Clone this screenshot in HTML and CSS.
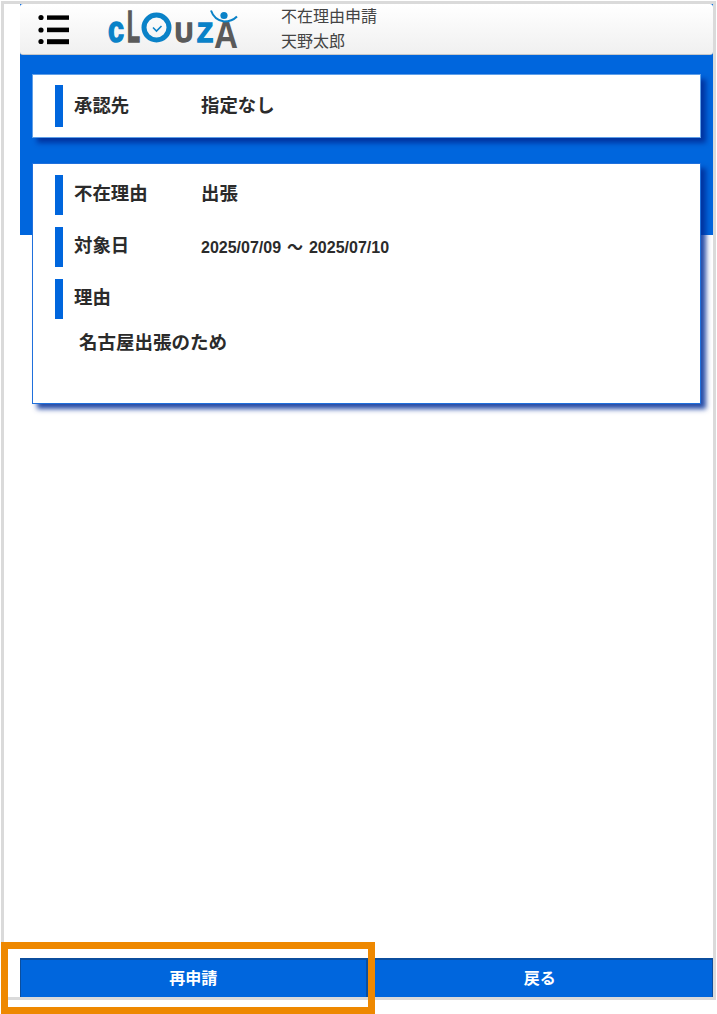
FILE: index.html
```html
<!DOCTYPE html>
<html lang="ja">
<head>
    <meta charset="UTF-8">
    <meta name="viewport" content="width=device-width, initial-scale=1.0">
    <title>不在理由申請</title>
    <link rel="stylesheet" href="styles.css">
</head>
<body>
    <div class="frame">
        <main class="screen">
            <header class="app-header">
                <svg class="menu-icon" width="32" height="32" viewBox="0 0 32 32" aria-hidden="true">
                    <circle cx="3" cy="4.5" r="2.6"/>
                    <circle cx="3" cy="17" r="2.6"/>
                    <circle cx="3" cy="28.5" r="2.6"/>
                    <rect x="9" y="2.4" width="22" height="4.4"/>
                    <rect x="9" y="14.6" width="22" height="4.6"/>
                    <rect x="9" y="26.2" width="22" height="5"/>
                </svg>
                <svg class="logo" width="140" height="60" viewBox="0 0 140 60" role="img" aria-label="cLOUZA">
                    <text class="logo-blue logo-heavy" x="2" y="42.5" font-size="36" textLength="16" lengthAdjust="spacingAndGlyphs">c</text>
                    <text class="logo-grey logo-heavy" x="21" y="42.5" font-size="44" textLength="13" lengthAdjust="spacingAndGlyphs">L</text>
                    <circle cx="50.5" cy="28.5" r="12.5" class="clock-ring"/>
                    <path d="M47 28.5l3.5 3.5 5-5" class="clock-hand"/>
                    <text class="logo-grey logo-heavy" x="69" y="42.5" font-size="27" textLength="18" lengthAdjust="spacingAndGlyphs">U</text>
                    <text class="logo-blue logo-heavy" x="91" y="42.5" font-size="27" textLength="16" lengthAdjust="spacingAndGlyphs">Z</text>
                    <text class="logo-grey" x="108" y="48.5" font-size="39" textLength="24" lengthAdjust="spacingAndGlyphs">A</text>
                    <circle cx="118" cy="16.5" r="3.6" class="logo-head"/>
                    <path d="M105 11.5c2 6 6 10 13 11c6 0 10-2 13-5" class="logo-arms"/>
                </svg>
                <div class="page-title">
                    <div>不在理由申請</div>
                    <div>天野太郎</div>
                </div>
            </header>

            <section class="card card-approver">
                <div class="row">
                    <div class="row-label">承認先</div>
                    <div class="row-value">指定なし</div>
                </div>
            </section>

            <section class="card card-detail">
                <div class="row">
                    <div class="row-label">不在理由</div>
                    <div class="row-value">出張</div>
                </div>
                <div class="row">
                    <div class="row-label">対象日</div>
                    <div class="row-value row-date">2025/07/09 ～ 2025/07/10</div>
                </div>
                <div class="row">
                    <div class="row-label">理由</div>
                </div>
                <p class="memo">名古屋出張のため</p>
            </section>

            <footer class="actions">
                <button class="action-btn">再申請</button>
                <button class="action-btn">戻る</button>
            </footer>
        </main>
    </div>
    <div class="highlight"></div>
</body>
</html>
```

FILE: styles.css
```css
html, body {
    margin: 0;
    padding: 0;
}

body {
    position: relative;
    height: 1014px;
    overflow: hidden;
    background-color: #ffffff;
    color: #2b2b2b;
    font-family: "Liberation Sans", "Noto Sans CJK JP", sans-serif;
}

.frame {
    box-sizing: border-box;
    width: 715px;
    height: 999px;
    margin: 1px 0 0 1px;
    border: 3px solid #dadada;
    padding-left: 16px;
    background-color: #ffffff;
}

.screen {
    display: flex;
    flex-direction: column;
    height: 100%;
    background: linear-gradient(#0066dd 231px, transparent 231px);
}

.app-header {
    box-sizing: border-box;
    display: flex;
    align-items: center;
    height: 51px;
    padding-left: 18px;
    background: linear-gradient(#ffffff, #f0f0f0);
    border-bottom: 1px solid #c8c8c8;
    border-radius: 3px;
}

.menu-icon {
    flex: none;
    margin-right: 36px;
}

.menu-icon circle,
.menu-icon rect {
    fill: #000000;
}

.logo {
    flex: none;
    margin-right: 35px;
}

.logo text {
    font-family: "Liberation Sans", sans-serif;
    font-weight: bold;
}

.logo-blue,
.logo-head {
    fill: #0a82c8;
}

.logo-grey {
    fill: #5a5a5a;
}

.logo-blue.logo-heavy {
    stroke: #0a82c8;
    stroke-width: 1.5;
}

.logo-grey.logo-heavy {
    stroke: #5a5a5a;
    stroke-width: 1.5;
}

.clock-ring {
    fill: none;
    stroke: #0a82c8;
    stroke-width: 5;
}

.clock-hand {
    fill: none;
    stroke: #0a82c8;
    stroke-width: 1.6;
}

.logo-arms {
    fill: none;
    stroke: #0a82c8;
    stroke-width: 2;
}

.page-title {
    font-size: 16px;
    line-height: 25px;
    color: #444444;
}

.card {
    box-sizing: border-box;
    margin: 0 12px;
    padding: 10px 22px;
    background-color: #ffffff;
    border: 1px solid #5f9fe8;
    box-shadow: 5px 5px 5px rgba(0, 45, 150, 0.85);
}

.card-approver {
    height: 64px;
    margin-top: 19px;
}

.card-detail {
    height: 241px;
    margin-top: 25px;
    padding-top: 11px;
    border-color: #1f70dc;
}

.row {
    box-sizing: border-box;
    display: flex;
    align-items: center;
    height: 40px;
    margin-bottom: 12px;
    padding: 0 0 6px 11px;
    border-left: 8px solid #0066dd;
    font-size: 18.4px;
    font-weight: bold;
}

.card-approver .row {
    height: 42px;
    margin-bottom: 0;
    padding-bottom: 4px;
}

.row-label {
    flex: none;
    width: 127px;
}

.row-date {
    margin-top: 4px;
    font-size: 16px;
    word-spacing: 1.5px;
}

.memo {
    margin: 0 0 0 24px;
    font-size: 18.5px;
    font-weight: bold;
    line-height: 24px;
}

.actions {
    display: flex;
    margin-top: auto;
}

.action-btn {
    flex: 1;
    height: 39px;
    padding: 0 0 4px;
    background-color: #0066dd;
    border-style: solid;
    border-color: #0b4e9e;
    border-width: 2px 1px 0 1px;
    color: #ffffff;
    font-family: inherit;
    font-size: 16px;
    font-weight: bold;
}

.highlight {
    position: absolute;
    left: 1px;
    top: 942px;
    box-sizing: border-box;
    width: 374px;
    height: 72px;
    border: 7px solid #ee8800;
}
```
